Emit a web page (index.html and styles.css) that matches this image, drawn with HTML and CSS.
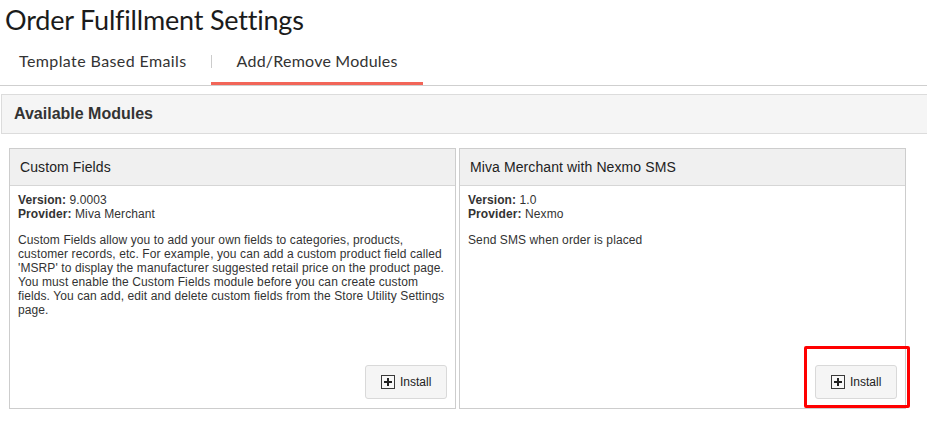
FILE: index.html
```html
<!DOCTYPE html>
<html>
<head>
<meta charset="utf-8">
<link rel="stylesheet" href="styles.css">
</head>
<body>
<div class="page">
  <h1 class="title">Order Fulfillment Settings</h1>
  <nav class="tabs">
    <a class="tab">Template Based Emails</a>
    <a class="tab active">Add/Remove Modules</a>
  </nav>
  <section class="section">
    <div class="section-head">Available Modules</div>
    <div class="cards">
      <div class="card">
        <div class="card-head">Custom Fields</div>
        <div class="card-body">
          <div class="meta"><b>Version:</b> 9.0003<br><b>Provider:</b> Miva Merchant</div>
          <p class="desc">Custom Fields allow you to add your own fields to categories, products, customer records, etc. For example, you can add a custom product field called 'MSRP' to display the manufacturer suggested retail price on the product page. You must enable the Custom Fields module before you can create custom fields. You can add, edit and delete custom fields from the Store Utility Settings page.</p>
          <div class="actions"><button class="btn"><span class="plus"></span>Install</button></div>
        </div>
      </div>
      <div class="card">
        <div class="card-head">Miva Merchant with Nexmo SMS</div>
        <div class="card-body">
          <div class="meta"><b>Version:</b> 1.0<br><b>Provider:</b> Nexmo</div>
          <p class="desc">Send SMS when order is placed</p>
          <div class="actions"><button class="btn"><span class="plus"></span>Install</button></div>
        </div>
      </div>
    </div>
  </section>
  <div class="highlight"></div>
</div>
</body>
</html>
```
FILE: styles.css
```css
* { box-sizing: border-box; }
html, body { margin: 0; padding: 0; background: #fff; }
.page { position: relative; width: 927px; height: 429px; overflow: hidden; font-family: "Liberation Sans", Arial, sans-serif; color: #333; }
.title { margin: 0; padding: 3px 0 0 5px; height: 42px; font-family: Lato, "Noto Sans", sans-serif; font-weight: 400; font-size: 27px; letter-spacing: -0.2px; line-height: 34px; color: #1b1b1b; }
.tabs { display: flex; height: 44px; border-bottom: 1px solid #cfcfcf; font-family: Lato, "Noto Sans", sans-serif; font-size: 16px; color: #333; }
.tab { display: block; padding: 9px 24px 0 19px; line-height: 20px; letter-spacing: 0.4px; }
.tab.active { position: relative; padding: 9px 25px 0 26px; border-bottom: 3px solid #f26558; letter-spacing: 0.22px; }
.tab.active::before { content: ""; position: absolute; left: 0; top: 13px; width: 1px; height: 13px; background: #ccc; }
.section { margin-top: 8px; }
.section-head { margin-left: 1px; height: 40px; background: #f5f5f5; border-top: 1px solid #dcdcdc; border-bottom: 1px solid #dcdcdc; border-left: 1px solid #dcdcdc; padding-left: 12px; font-weight: bold; font-size: 16px; line-height: 38px; color: #333; }
.cards { display: flex; gap: 3px; padding: 14px 0 0 9px; }
.card { width: 447px; height: 261px; border: 1px solid #cdcdcd; display: flex; flex-direction: column; }
.card-head { height: 37px; background: #f0f0f0; border-bottom: 1px solid #d6d6d6; padding-left: 10px; font-size: 14px; line-height: 36px; color: #222; letter-spacing: 0.1px; }
.card-body { flex: 1; display: flex; flex-direction: column; padding: 7px 8px 9px 8px; font-size: 12px; line-height: 14px; letter-spacing: 0.1px; }
.meta b { color: #333; }
.desc { margin: 12px 0 0 0; }
.actions { margin-top: auto; display: flex; justify-content: flex-end; }
.btn { display: flex; align-items: center; width: 82px; height: 34px; padding: 0 0 0 15px; background: #f5f5f5; border: 1px solid #d9d9d9; border-radius: 3px; font-family: "Liberation Sans", Arial, sans-serif; font-size: 12px; color: #222; }
.plus { position: relative; width: 14px; height: 14px; margin-right: 5px; border: 1px solid #3a3a3a; background: #f8f8f8; }
.plus::before, .plus::after { content: ""; position: absolute; background: #222; }
.plus::before { left: 2px; top: 5px; width: 8px; height: 2px; }
.plus::after { left: 5px; top: 2px; width: 2px; height: 8px; }
.highlight { position: absolute; left: 804px; top: 346px; width: 106px; height: 62px; border: 3px solid #ff0000; border-radius: 2px; pointer-events: none; }
```
